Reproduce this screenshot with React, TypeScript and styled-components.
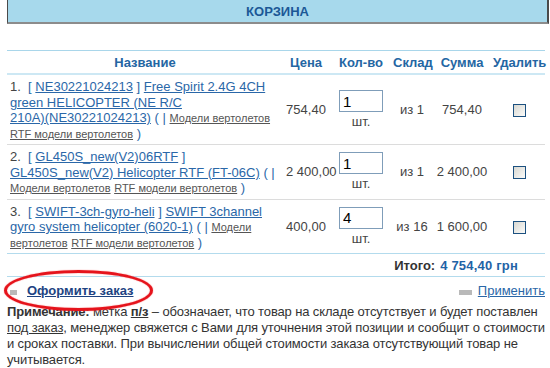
import styled, { createGlobalStyle } from "styled-components";

const Global = createGlobalStyle`
  body {
    margin: 0;
    background: #fff;
    font-family: "Liberation Sans", Arial, sans-serif;
    font-size: 13px;
    color: #333;
  }
`;

const Page = styled.div`
  width: 550px;
  height: 368px;
  overflow: hidden;
  padding-left: 7px;
  box-sizing: border-box;
`;

const TitleBar = styled.div`
  width: 542px;
  height: 24px;
  box-sizing: border-box;
  background: #a7d9ec;
  border-left: 1px solid #4a4a4a;
  border-right: 2px solid #4a4a4a;
  border-bottom: 2px solid #8c8c8c;
  display: flex;
  align-items: center;
  justify-content: center;
  font-weight: bold;
  color: #1b5896;
`;

const Cart = styled.table`
  width: 538px;
  margin-top: 26px;
  border-collapse: collapse;
  table-layout: fixed;
`;

const Head = styled.th<{ $w: number }>`
  width: ${(p) => p.$w}px;
  height: 22px;
  padding: 0;
  font-weight: bold;
  color: #2466a3;
  text-align: center;
  border-top: 1px solid #a9d6ea;
  border-bottom: 2px solid #cde8f4;
  white-space: nowrap;
`;

const Cell = styled.td<{ $last?: boolean }>`
  padding: 4px 3px 3px;
  vertical-align: middle;
  text-align: center;
  line-height: 16px;
  color: #444;
  border-bottom: 1px solid ${(p) => (p.$last ? "#b3dbed" : "#dcdcdc")};
  white-space: nowrap;
`;

const NameCell = styled(Cell)`
  text-align: left;
  white-space: normal;
  line-height: 15.5px;
  padding: 4px 5px 3px 3px;
`;

const Num = styled.span`
  color: #444;
`;

const Mark = styled.span`
  color: #2a67a8;
`;

const Link = styled.a`
  color: #2a67a8;
  text-decoration: underline;
`;

const Cat = styled.a`
  color: #555;
  font-size: 11px;
  line-height: 12px;
  text-decoration: underline;
`;

const Qty = styled.div`
  display: flex;
  flex-direction: column;
  align-items: center;
  gap: 2px;
`;

const QtyInput = styled.input`
  width: 44px;
  height: 22px;
  box-sizing: border-box;
  border: 1px solid #7f9db9;
  padding: 0 3px;
  font-family: "Liberation Sans", Arial, sans-serif;
  font-size: 15px;
  color: #000;
  outline: none;
`;

const Box = styled.input`
  appearance: none;
  width: 13px;
  height: 13px;
  margin: 0 0 0 1px;
  border: 1px solid #1c5180;
  background: linear-gradient(135deg, #d8d8d2, #fbfbf9);
  vertical-align: middle;
`;

const TotalCell = styled.td`
  height: 22px;
  padding: 0 27px 0 0;
  text-align: right;
  font-weight: bold;
  color: #333;
  border-bottom: 1px solid #b3dbed;
`;

const TotalSum = styled.span`
  color: #1f63a6;
  margin-left: 5px;
  letter-spacing: 0.2px;
`;

const Actions = styled.div`
  width: 538px;
  height: 27px;
  display: flex;
  align-items: center;
  justify-content: space-between;
  padding-left: 3px;
  box-sizing: border-box;
`;

const Order = styled.div`
  position: relative;
  display: flex;
  align-items: center;
  gap: 10px;
`;

const Dash = styled.span<{ $w: number }>`
  display: inline-block;
  width: ${(p) => p.$w}px;
  height: 5px;
  margin-top: 4px;
  background: #b9b9b9;
`;

const OrderLink = styled.a`
  font-weight: bold;
  color: #1d4382;
  text-decoration: underline;
`;

const Ellipse = styled.span`
  position: absolute;
  left: -6px;
  right: -20px;
  top: -13px;
  bottom: -13px;
  border: 3px solid #e5141c;
  border-radius: 50%;
  box-shadow: 0 0 1px #f33, inset 0 0 1px #f33;
  pointer-events: none;
`;

const Apply = styled.div`
  display: flex;
  align-items: center;
  gap: 6px;
`;

const ApplyLink = styled.a`
  color: #2a67a8;
  text-decoration: underline;
`;

const Note = styled.p`
  width: 545px;
  margin: 0;
  line-height: 16px;
  letter-spacing: -0.13px;
  color: #333;
`;

const items = [
  {
    n: 1,
    code: "NE30221024213",
    title: "Free Spirit 2.4G 4CH green HELICOPTER (NE R/C 210A)\u2060(NE30221024213)",
    price: "754,40",
    qty: "1",
    stock: "из 1",
    sum: "754,40",
  },
  {
    n: 2,
    code: "GL450S_new(V2)06RTF",
    title: "GL450S_new(V2) Helicopter RTF (FT-06C)",
    price: "2 400,00",
    qty: "1",
    stock: "из 1",
    sum: "2 400,00",
  },
  {
    n: 3,
    code: "SWIFT-3ch-gyro-heli",
    title: "SWIFT 3channel gyro system helicopter (6020-1)",
    price: "400,00",
    qty: "4",
    stock: "из 16",
    sum: "1 600,00",
  },
];

export default function App() {
  return (
    <>
      <Global />
      <Page>
        <TitleBar>КОРЗИНА</TitleBar>
        <Cart>
          <thead>
            <tr>
              <Head $w={276}>Название</Head>
              <Head $w={46}>Цена</Head>
              <Head $w={64}>Кол-во</Head>
              <Head $w={38}>Склад</Head>
              <Head $w={62}>Сумма</Head>
              <Head $w={52}>Удалить</Head>
            </tr>
          </thead>
          <tbody>
            {items.map((it, i) => {
              const last = i === items.length - 1;
              return (
                <tr key={it.n}>
                  <NameCell $last={last}>
                    <Num>{it.n}.</Num>&nbsp;&nbsp;<Mark>[</Mark> <Link>{it.code}</Link> <Mark>]</Mark>{" "}
                    <Link>{it.title}</Link> <Mark>( |</Mark> <Cat>Модели вертолетов</Cat>{" "}
                    <Cat>RTF модели вертолетов</Cat> <Mark>)</Mark>
                  </NameCell>
                  <Cell $last={last}>{it.price}</Cell>
                  <Cell $last={last}>
                    <Qty>
                      <QtyInput defaultValue={it.qty} />
                      <span>шт.</span>
                    </Qty>
                  </Cell>
                  <Cell $last={last}>{it.stock}</Cell>
                  <Cell $last={last}>{it.sum}</Cell>
                  <Cell $last={last}>
                    <Box type="checkbox" />
                  </Cell>
                </tr>
              );
            })}
            <tr>
              <TotalCell colSpan={6}>
                Итого:<TotalSum>4 754,40 грн</TotalSum>
              </TotalCell>
            </tr>
          </tbody>
        </Cart>
        <Actions>
          <Order>
            <Dash $w={7} />
            <OrderLink>Оформить заказ</OrderLink>
            <Ellipse />
          </Order>
          <Apply>
            <Dash $w={13} />
            <ApplyLink>Применить</ApplyLink>
          </Apply>
        </Actions>
        <Note>
          <b>Примечание:</b> метка <b><u>п/з</u></b> – обозначает, что товар на складе отсутствует и
          будет поставлен <u>под заказ</u>, менеджер свяжется с Вами для уточнения этой позиции и
          сообщит о стоимости и сроках поставки. При вычислении общей стоимости заказа
          отсутствующий товар не учитывается.
        </Note>
      </Page>
    </>
  );
}
